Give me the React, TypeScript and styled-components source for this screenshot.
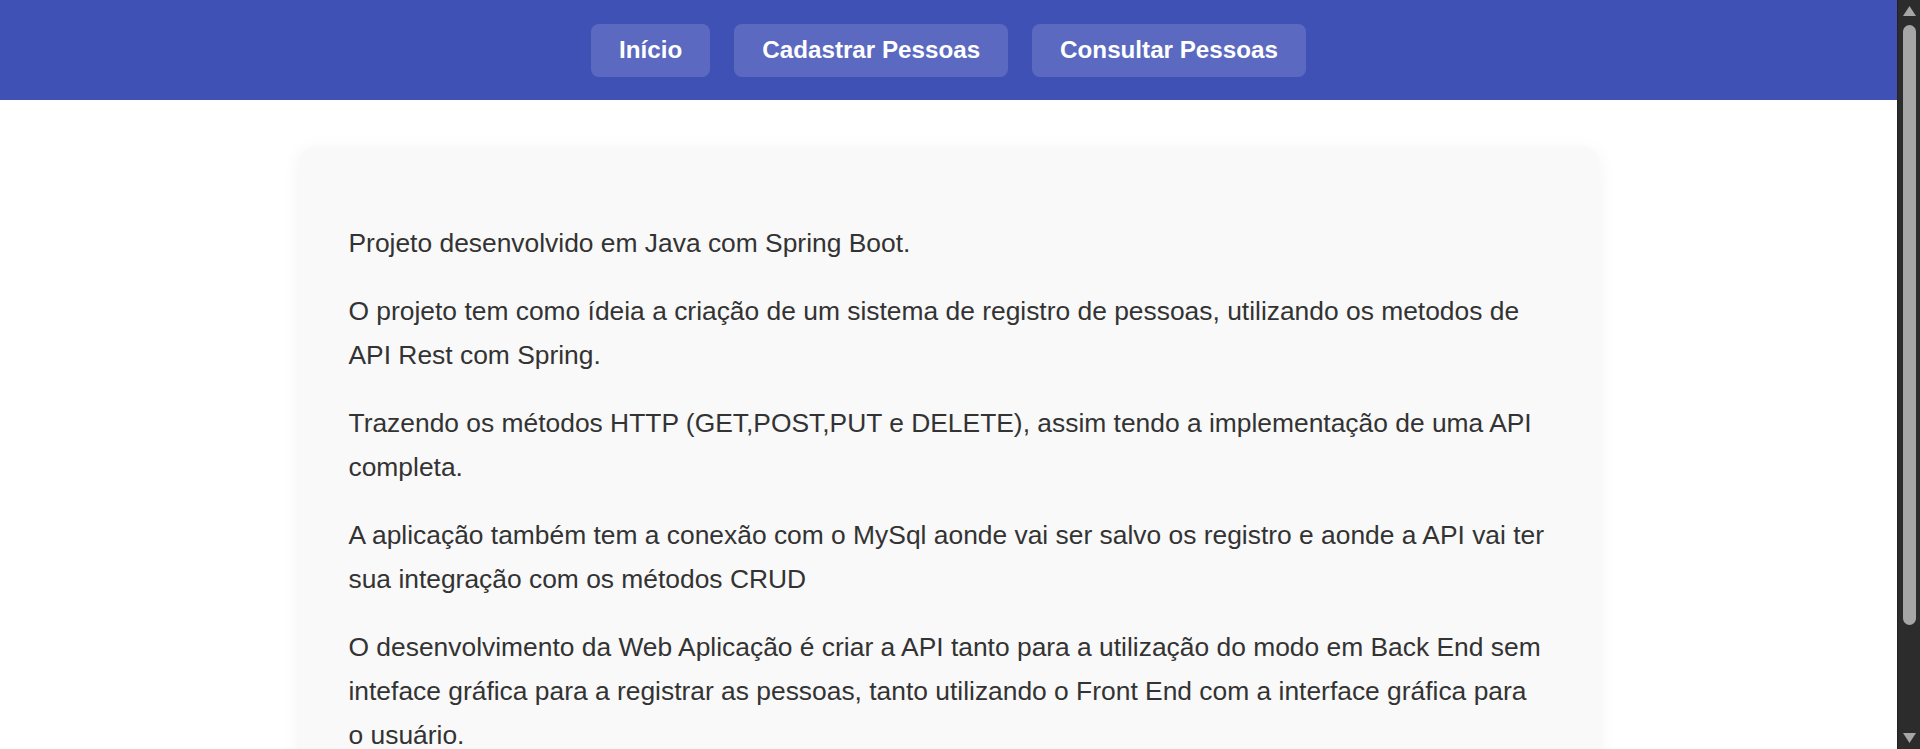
import React from "react";
import styled, { createGlobalStyle } from "styled-components";

const GlobalStyle = createGlobalStyle`
  html, body {
    margin: 0;
    height: 100%;
    overflow: hidden;
    background: #ffffff;
  }
  body {
    color: #333333;
    font-family: "Liberation Sans", Arial, sans-serif;
  }
  #root {
    height: 100%;
  }
  * {
    box-sizing: border-box;
  }
`;

const Viewport = styled.div`
  display: flex;
  height: 100vh;
  width: 100%;
`;

const Page = styled.div`
  flex: 1;
  min-width: 0;
  overflow-y: auto;
  scrollbar-width: none;
  &::-webkit-scrollbar {
    display: none;
  }
`;

const ScrollTrack = styled.div`
  width: 23px;
  flex: 0 0 23px;
  background: #2c2c2c;
  border-left: 1px solid #222222;
  display: flex;
  flex-direction: column;
  align-items: center;
  padding: 6px 0 6px 1px;
`;

const ScrollThumb = styled.div`
  width: 13px;
  height: 600px;
  margin-top: 9px;
  border-radius: 7px;
  background: #a6a6a6;
`;

const Spacer = styled.div`
  flex: 1;
`;

const Arrow = styled.svg`
  width: 13px;
  height: 10px;
  display: block;
`;

const Header = styled.header`
  background: #3f51b5;
  height: 100px;
  display: flex;
  align-items: center;
  justify-content: center;
  gap: 24px;
`;

const NavButton = styled.a`
  display: inline-flex;
  align-items: center;
  justify-content: center;
  height: 53px;
  padding: 0 28px;
  border-radius: 8px;
  background: rgba(255, 255, 255, 0.15);
  color: #ffffff;
  font-family: "Liberation Sans", Arial, sans-serif;
  font-weight: 700;
  font-size: 24.2px;
  text-decoration: none;
  cursor: pointer;
`;

const Main = styled.main`
  padding: 47px 0 72px;
  display: flex;
  justify-content: center;
`;

const Card = styled.section`
  width: 1298px;
  background: #f9f9f9;
  border-radius: 14px;
  box-shadow: 0 4px 20px rgba(0, 0, 0, 0.06);
  padding: 50px 53px 48px 49px;
`;

const Paragraph = styled.p`
  margin: 24px 0;
  font-size: 26.4px;
  line-height: 44px;
  color: #333333;
`;

const paragraphs = [
  "Projeto desenvolvido em Java com Spring Boot.",
  "O projeto tem como ídeia a criação de um sistema de registro de pessoas, utilizando os metodos de API Rest com Spring.",
  "Trazendo os métodos HTTP (GET,POST,PUT e DELETE), assim tendo a implementação de uma API completa.",
  "A aplicação também tem a conexão com o MySql aonde vai ser salvo os registro e aonde a API vai ter sua integração com os métodos CRUD",
  "O desenvolvimento da Web Aplicação é criar a API tanto para a utilização do modo em Back End sem inteface gráfica para a registrar as pessoas, tanto utilizando o Front End com a interface gráfica para o usuário.",
];

export default function App() {
  return (
    <>
      <GlobalStyle />
      <Viewport>
        <Page>
          <Header>
            <NavButton>Início</NavButton>
            <NavButton>Cadastrar Pessoas</NavButton>
            <NavButton>Consultar Pessoas</NavButton>
          </Header>
          <Main>
            <Card>
              {paragraphs.map((t, i) => (
                <Paragraph key={i}>{t}</Paragraph>
              ))}
            </Card>
          </Main>
        </Page>
        <ScrollTrack>
          <Arrow viewBox="0 0 13 10">
            <polygon points="6.5,0 13,10 0,10" fill="#a6a6a6" />
          </Arrow>
          <ScrollThumb />
          <Spacer />
          <Arrow viewBox="0 0 13 10">
            <polygon points="0,0 13,0 6.5,10" fill="#a6a6a6" />
          </Arrow>
        </ScrollTrack>
      </Viewport>
    </>
  );
}
